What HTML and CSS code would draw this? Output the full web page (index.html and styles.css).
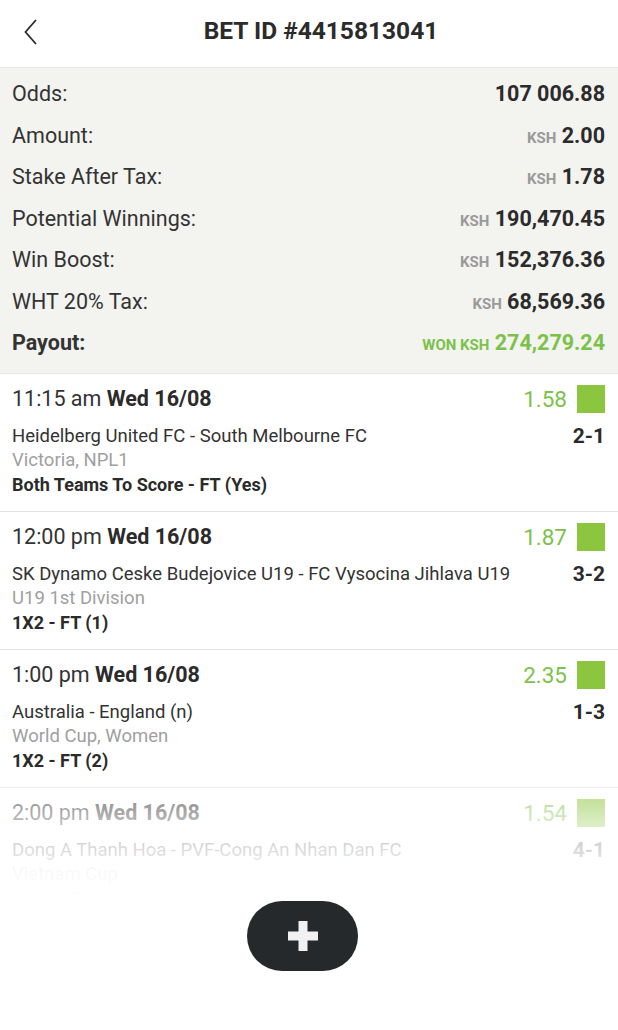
FILE: index.html
```html
<!DOCTYPE html>
<html lang="en">
<head>
    <meta charset="UTF-8">
    <meta name="viewport" content="width=device-width, initial-scale=1.0">
    <title>Bet Details</title>
    <link rel="stylesheet" href="styles.css">
</head>
<body>
    <div class="page">
        <div class="header">
            <button class="back-button" aria-label="Back">
                <svg width="16" height="28" viewBox="0 0 16 28"><path d="M13 2 L2.5 14 L13 26" fill="none" stroke="#2b2b2b" stroke-width="1.8"/></svg>
            </button>
            <h1>BET ID #4415813041</h1>
        </div>

        <div class="summary">
            <div class="row"><span>Odds:</span><span class="value">107 006.88</span></div>
            <div class="row"><span>Amount:</span><span class="value"><small>KSH</small> 2.00</span></div>
            <div class="row"><span>Stake After Tax:</span><span class="value"><small>KSH</small> 1.78</span></div>
            <div class="row"><span>Potential Winnings:</span><span class="value"><small>KSH</small> 190,470.45</span></div>
            <div class="row"><span>Win Boost:</span><span class="value"><small>KSH</small> 152,376.36</span></div>
            <div class="row"><span>WHT 20% Tax:</span><span class="value"><small>KSH</small> 68,569.36</span></div>
            <div class="row payout"><span>Payout:</span><span class="value won"><small>WON KSH</small> 274,279.24</span></div>
        </div>

        <div class="selections">
            <div class="selection">
                <div class="top-line">
                    <span class="time">11:15 am <b>Wed 16/08</b></span>
                    <span class="odd">1.58 <i class="status"></i></span>
                </div>
                <div class="teams-line"><span>Heidelberg United FC - South Melbourne FC</span><b class="score">2-1</b></div>
                <div class="league">Victoria, NPL1</div>
                <div class="market">Both Teams To Score - FT (Yes)</div>
            </div>
            <div class="selection">
                <div class="top-line">
                    <span class="time">12:00 pm <b>Wed 16/08</b></span>
                    <span class="odd">1.87 <i class="status"></i></span>
                </div>
                <div class="teams-line"><span>SK Dynamo Ceske Budejovice U19 - FC Vysocina Jihlava U19</span><b class="score">3-2</b></div>
                <div class="league">U19 1st Division</div>
                <div class="market">1X2 - FT (1)</div>
            </div>
            <div class="selection">
                <div class="top-line">
                    <span class="time">1:00 pm <b>Wed 16/08</b></span>
                    <span class="odd">2.35 <i class="status"></i></span>
                </div>
                <div class="teams-line"><span>Australia - England (n)</span><b class="score">1-3</b></div>
                <div class="league">World Cup, Women</div>
                <div class="market">1X2 - FT (2)</div>
            </div>
            <div class="selection">
                <div class="top-line">
                    <span class="time">2:00 pm <b>Wed 16/08</b></span>
                    <span class="odd">1.54 <i class="status"></i></span>
                </div>
                <div class="teams-line"><span>Dong A Thanh Hoa - PVF-Cong An Nhan Dan FC</span><b class="score">4-1</b></div>
                <div class="league">Vietnam Cup</div>
                <div class="market">1X2 - FT (1)</div>
            </div>
        </div>

        <div class="fade">
            <button class="add-button" aria-label="Add">
                <svg width="32" height="32" viewBox="0 0 32 32"><path d="M11.5 1 H20.5 V11.5 H31 V20.5 H20.5 V31 H11.5 V20.5 H1 V11.5 H11.5 Z" fill="#f1f1f1"/></svg>
            </button>
        </div>
    </div>
</body>
</html>
```

FILE: styles.css
```css
body {
    margin: 0;
    padding: 0;
    font-family: Roboto, "Noto Sans", sans-serif;
    color: #2b2b2b;
    background: #fff;
}
.page {
    position: relative;
    width: 618px;
    height: 1030px;
    overflow: hidden;
}
.header {
    height: 67px;
    display: flex;
    align-items: center;
    justify-content: center;
    position: relative;
    border-bottom: 1px solid #e8e8e4;
}
.header h1 {
    margin: -6px 0 0 24px;
    font-size: 24.5px;
    font-weight: 700;
    color: #2b2b2b;
}
.back-button {
    position: absolute;
    left: 23px;
    top: 18px;
    background: none;
    border: none;
    padding: 0;
    cursor: pointer;
}
.summary {
    background-color: #f3f3f0;
    padding: 5px 13px 9px 12px;
}
.row {
    height: 41.5px;
    display: flex;
    justify-content: space-between;
    align-items: center;
    font-size: 21.5px;
    color: #333;
}
.row .value {
    font-weight: 700;
    color: #2b2b2b;
}
.row .value small {
    font-size: 15px;
    color: #9a9a9a;
    font-weight: 700;
}
.payout span:first-child {
    font-weight: 700;
}
.row .won,
.row .won small {
    color: #7cc24a;
}
.selection {
    border-top: 1px solid #e4e4e4;
    padding: 11px 13px 14px 12px;
}
.top-line {
    display: flex;
    justify-content: space-between;
    align-items: center;
    height: 28px;
    font-size: 21.5px;
}
.time {
    color: #333;
}
.time b {
    font-weight: 700;
    color: #2b2b2b;
}
.odd {
    display: flex;
    align-items: center;
    gap: 10px;
    font-size: 22.5px;
    color: #7cc24a;
}
.status {
    display: inline-block;
    width: 28px;
    height: 28px;
    background-color: #8cc63f;
}
.teams-line {
    margin-top: 11px;
    display: flex;
    justify-content: space-between;
    align-items: center;
    height: 24px;
    font-size: 18.5px;
    color: #333;
}
.score {
    font-size: 21px;
    color: #2b2b2b;
}
.league {
    height: 24px;
    line-height: 24px;
    font-size: 18.5px;
    color: #a0a0a0;
}
.market {
    height: 25px;
    line-height: 25px;
    font-size: 18px;
    font-weight: 700;
    color: #2b2b2b;
}
.fade {
    position: absolute;
    left: 0;
    right: 0;
    top: 785px;
    bottom: 0;
    background: linear-gradient(to bottom, rgba(255, 255, 255, 0.35) 0px, rgba(255, 255, 255, 0.7) 40px, rgba(255, 255, 255, 0.92) 85px, #fff 110px);
}
.add-button {
    position: absolute;
    left: 247px;
    top: 116px;
    width: 111px;
    height: 70px;
    border-radius: 35px;
    border: none;
    background-color: #25292b;
    display: flex;
    align-items: center;
    justify-content: center;
    cursor: pointer;
}
```
